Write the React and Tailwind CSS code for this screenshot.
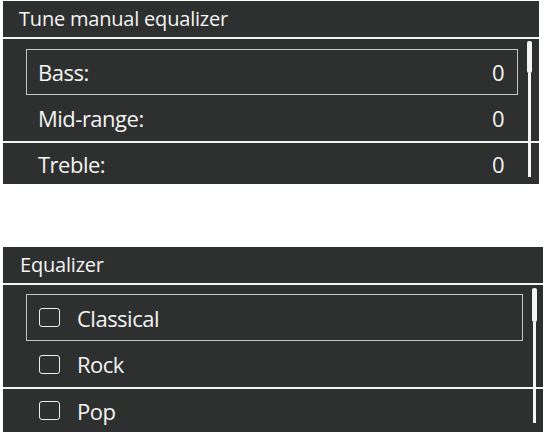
const Scrollbar = ({ className, thumb }) => (
  <div className={`absolute flex w-[5px] flex-col items-center ${className}`}>
    <div className={`w-[5px] rounded-[2px] bg-[#f4f4f4] ${thumb}`} />
    <div className="w-[3px] flex-1 bg-[#f4f4f4]" />
  </div>
);

const Checkbox = () => (
  <span className="inline-block h-[19px] w-[21px] shrink-0 rounded-[3px] border-[1.5px] border-[#eeeeee]" />
);

const ManualPanel = () => {
  const rows = [
    { label: 'Bass:', value: 0, focused: true, h: 'h-[46px]' },
    { label: 'Mid-range:', value: 0, h: 'h-[46px]' },
  ];

  return (
    <div className="ml-[3px] mt-[1px] w-[536px] bg-[#2e2f2f] text-[#f4f4f4]">
      <div className="flex h-[36px] items-center pl-[16px] text-[20px] tracking-[-0.2px]">Tune manual equalizer</div>
      <div className="h-[2px] bg-[#f4f4f4]" />
      <div className="relative">
        <div className="pl-[23px] pr-[21px] pt-[10px]">
          {rows.map((r) => (
            <div
              key={r.label}
              className={`flex ${r.h} items-center justify-between border pl-[11px] pr-[13px] ${
                r.focused ? 'border-[#c6c6c6]' : 'border-transparent'
              }`}
            >
              <span>{r.label}</span>
              <span>{r.value}</span>
            </div>
          ))}
        </div>
        <div className="h-[2px] bg-[#f4f4f4]" />
        <div className="pl-[23px] pr-[21px]">
          <div className="flex h-[41px] items-center justify-between border border-transparent pl-[11px] pr-[13px]">
            <span>Treble:</span>
            <span>0</span>
          </div>
        </div>
        <Scrollbar className="right-[7px] top-[2px] h-[136px]" thumb="h-[32px]" />
      </div>
    </div>
  );
};

const PresetPanel = () => {
  const rows = [
    { label: 'Classical', focused: true, h: 'h-[47px]' },
    { label: 'Rock', h: 'h-[46px]' },
  ];

  return (
    <div className="ml-[3px] mt-[63px] w-[540px] bg-[#2e2f2f] text-[#f4f4f4]">
      <div className="flex h-[36px] items-center pl-[17px] text-[20px] tracking-[-0.2px]">Equalizer</div>
      <div className="h-[2px] bg-[#f4f4f4]" />
      <div className="relative">
        <div className="pl-[23px] pr-[20px] pt-[9px]">
          {rows.map((r) => (
            <div
              key={r.label}
              className={`flex ${r.h} items-center gap-[17px] border pl-[12px] ${
                r.focused ? 'border-[#c6c6c6]' : 'border-transparent'
              }`}
            >
              <Checkbox />
              <span>{r.label}</span>
            </div>
          ))}
        </div>
        <div className="h-[2px] bg-[#f4f4f4]" />
        <div className="pl-[23px] pr-[20px]">
          <div className="flex h-[43px] items-center gap-[17px] border border-transparent pl-[12px]">
            <Checkbox />
            <span>Pop</span>
          </div>
        </div>
        <Scrollbar className="right-[6px] top-[3px] h-[135px]" thumb="h-[34px]" />
      </div>
    </div>
  );
};

const App = () => (
  <div
    className="h-[435px] w-[546px] overflow-hidden bg-white text-[22px] font-medium leading-none tracking-[-0.5px]"
    style={{ fontFamily: '"Open Sans", "Noto Sans", sans-serif' }}
  >
    <ManualPanel />
    <PresetPanel />
  </div>
);

export default App;
